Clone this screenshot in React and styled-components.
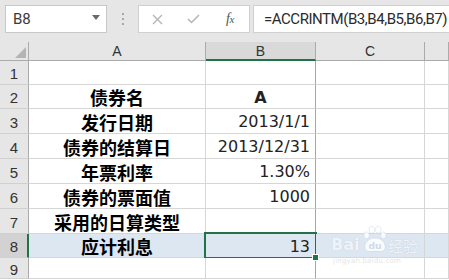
import React from "react";
import styled, { createGlobalStyle, css } from "styled-components";

const Global = createGlobalStyle`
  html, body { margin: 0; padding: 0; background: #ffffff; }
  body { width: 449px; height: 280px; overflow: hidden; }
  #root { width: 449px; height: 280px; }
`;

const Page = styled.div`
  width: 449px;
  height: 280px;
  overflow: hidden;
  background: #ffffff;
  display: flex;
  flex-direction: column;
  font-family: "Liberation Sans", Arial, sans-serif;
`;

const Toolbar = styled.div`
  height: 42px;
  flex: none;
  background: #e6e6e6;
  display: flex;
  align-items: flex-start;
  padding: 5px 0 0 5px;
  box-sizing: border-box;
`;

const NameBox = styled.div`
  width: 102px;
  height: 28px;
  box-sizing: border-box;
  background: #fff;
  border: 1px solid #c8c8c8;
  display: flex;
  align-items: center;
  justify-content: space-between;
  padding: 0 6px 0 7px;
  font-family: Roboto, "Liberation Sans", sans-serif;
  font-size: 15px;
  color: #3a3a3a;
`;

const Caret = styled.span`
  width: 0;
  height: 0;
  border-left: 4px solid transparent;
  border-right: 4px solid transparent;
  border-top: 5px solid #6a6a6a;
  margin-top: -3px;
`;

const Dots = styled.div`
  width: 31px;
  height: 28px;
  display: flex;
  flex-direction: column;
  align-items: center;
  justify-content: center;
  gap: 3px;
  & > i {
    width: 2px;
    height: 2px;
    background: #a8a8a8;
    display: block;
  }
`;

const ButtonBox = styled.div`
  width: 112px;
  height: 28px;
  box-sizing: border-box;
  background: #fff;
  border: 1px solid #d0d0d0;
  display: flex;
  align-items: center;
`;

const ToolButton = styled.div`
  width: ${(p) => p.$w}px;
  height: 100%;
  display: flex;
  align-items: center;
  justify-content: center;
  color: ${(p) => p.$color || "#bdbdbd"};
`;

const Fx = styled.span`
  font-family: "Liberation Serif", "Times New Roman", serif;
  font-style: italic;
  font-size: 14px;
  color: #555;
  letter-spacing: -0.5px;
  & > small {
    font-size: 11px;
  }
`;

const FormulaInput = styled.div`
  flex: 1;
  margin-left: 3px;
  height: 28px;
  box-sizing: border-box;
  background: #fff;
  border: 1px solid #d0d0d0;
  border-right: none;
  display: flex;
  align-items: center;
  padding-left: 10px;
  font-family: Roboto, "Liberation Sans", sans-serif;
  font-size: 15px;
  letter-spacing: -0.45px;
  color: #2b2b2b;
  white-space: nowrap;
  overflow: hidden;
`;

const Sheet = styled.div`
  position: relative;
  flex: 1;
  display: grid;
  grid-template-columns: 29px 177px 110px 109px 1fr;
  grid-template-rows: 19px 24px 24px 25px 25px 25px 25px 25px 24px 21px;
  background: #fff;
`;

const HeadCell = styled.div`
  box-sizing: border-box;
  background: ${(p) => (p.$sel ? "#d9d9d9" : "#e6e6e6")};
  border-right: 1px solid #ababab;
  border-bottom: ${(p) => (p.$sel ? "2px solid #217346" : "1px solid #ababab")};
  display: flex;
  align-items: center;
  justify-content: center;
  font-size: 14px;
  color: #333;
  padding-top: ${(p) => (p.$sel ? "1px" : "0")};
`;

const Corner = styled(HeadCell)`
  position: relative;
  align-items: flex-end;
  justify-content: flex-end;
  padding: 0 2px 2px 0;
  &::after {
    content: "";
    width: 0;
    height: 0;
    border-left: 11px solid transparent;
    border-bottom: 11px solid #b4b4b4;
  }
`;

const RowHead = styled.div`
  box-sizing: border-box;
  background: ${(p) => (p.$sel ? "#d2d2d2" : "#e6e6e6")};
  border-right: ${(p) => (p.$sel ? "2px solid #217346" : "1px solid #ababab")};
  border-bottom: 1px solid #d0d0d0;
  display: flex;
  align-items: center;
  justify-content: center;
  font-size: 15px;
  color: #333;
  padding-top: 2px;
  padding-left: ${(p) => (p.$sel ? "1px" : "0")};
`;

const Cell = styled.div`
  box-sizing: border-box;
  position: relative;
  background: ${(p) => (p.$hl ? "#dde7f2" : "#fff")};
  border-right: 1px solid ${(p) => (p.$dark ? "#a6a6a6" : "#d6d6d6")};
  border-bottom: 1px solid #d6d6d6;
  display: flex;
  align-items: center;
  padding: 1px 5px 0 5px;
  white-space: nowrap;
  justify-content: ${(p) =>
    p.$align === "center" ? "center" : p.$align === "right" ? "flex-end" : "flex-start"};
  ${(p) =>
    p.$label &&
    css`
      font-family: "Noto Sans CJK SC", "Noto Sans", sans-serif;
      font-weight: 700;
      font-size: 18px;
      line-height: 18px;
      color: #000;
    `}
  ${(p) =>
    p.$value &&
    css`
      font-family: "DejaVu Sans", "Liberation Sans", sans-serif;
      font-size: 16px;
      color: #222;
      font-weight: ${p.$bold ? 700 : 400};
    `}
  ${(p) =>
    p.$active &&
    css`
      &::after {
        content: "";
        position: absolute;
        left: -2px;
        top: -2px;
        right: -2px;
        bottom: -2px;
        border: 2px solid #217346;
        pointer-events: none;
      }
      &::before {
        content: "";
        position: absolute;
        right: -4px;
        bottom: -4px;
        width: 5px;
        height: 5px;
        background: #217346;
        border: 1px solid #fff;
        z-index: 2;
      }
    `}
`;

const Watermark = styled.div`
  position: absolute;
  left: 331px;
  top: 182px;
  width: 92px;
  height: 44px;
  pointer-events: none;
  display: flex;
  flex-direction: column;
  align-items: flex-start;
`;

const MarkLine = styled.div`
  display: flex;
  align-items: flex-end;
  height: 30px;
`;

const MarkText = styled.span`
  width: ${(p) => p.$w}px;
  font-family: "DejaVu Sans", sans-serif;
  font-weight: 700;
  font-size: ${(p) => p.$size}px;
  line-height: 1;
  color: rgba(255, 255, 255, 0.82);
  text-shadow: 0 0 1px rgba(150, 170, 190, 0.6);
  margin-bottom: 1px;
  white-space: nowrap;
  ${(p) =>
    p.$cjk &&
    css`
      font-family: "Noto Sans CJK SC", sans-serif;
      font-weight: 400;
    `}
`;

const SubMark = styled.span`
  margin: 3px 0 0 2px;
  font-family: "DejaVu Sans", sans-serif;
  font-size: 7px;
  letter-spacing: 0.2px;
  color: rgba(215, 215, 215, 0.7);
`;

const Paw = () => (
  <svg width="26" height="30" viewBox="0 0 28 30" style={{ display: "block", flex: "none" }}>
    <g fill="rgba(255,255,255,0.82)" stroke="rgba(170,185,200,0.5)" strokeWidth="0.6">
      <ellipse cx="5" cy="11" rx="3" ry="3.6" />
      <ellipse cx="10.5" cy="5" rx="3" ry="3.8" />
      <ellipse cx="17.5" cy="5" rx="3" ry="3.8" />
      <ellipse cx="23" cy="11" rx="3" ry="3.6" />
      <path d="M3 24 C3 17 9 14 14 14 C19 14 25 17 25 24 C25 29 19 29 14 28 C9 29 3 29 3 24 Z" />
    </g>
    <text
      x="14"
      y="26"
      textAnchor="middle"
      fontFamily="DejaVu Sans, sans-serif"
      fontWeight="700"
      fontSize="10"
      fill="rgba(200,215,230,0.9)"
    >
      du
    </text>
  </svg>
);

const XIcon = () => (
  <svg width="11" height="11" viewBox="0 0 11 11">
    <path d="M1 1 L10 10 M10 1 L1 10" stroke="#b5b5b5" strokeWidth="1.4" fill="none" />
  </svg>
);

const CheckIcon = () => (
  <svg width="13" height="10" viewBox="0 0 13 10">
    <path d="M1 5 L4.5 8.5 L12 1" stroke="#b5b5b5" strokeWidth="1.5" fill="none" />
  </svg>
);

const rows = [
  { n: 1 },
  { n: 2, a: "债券名", b: "A", bAlign: "center", bold: true },
  { n: 3, a: "发行日期", b: "2013/1/1" },
  { n: 4, a: "债券的结算日", b: "2013/12/31" },
  { n: 5, a: "年票利率", b: "1.30%" },
  { n: 6, a: "债券的票面值", b: "1000" },
  { n: 7, a: "采用的日算类型" },
  { n: 8, a: "应计利息", b: "13", sel: true },
  { n: 9 },
];

export default function App() {
  return (
    <Page>
      <Global />
      <Toolbar>
        <NameBox>
          <span>B8</span>
          <Caret />
        </NameBox>
        <Dots>
          <i />
          <i />
          <i />
        </Dots>
        <ButtonBox>
          <ToolButton $w={36}>
            <XIcon />
          </ToolButton>
          <ToolButton $w={36}>
            <CheckIcon />
          </ToolButton>
          <ToolButton $w={38} $color="#555">
            <Fx>
              f<small>x</small>
            </Fx>
          </ToolButton>
        </ButtonBox>
        <FormulaInput>=ACCRINTM(B3,B4,B5,B6,B7)</FormulaInput>
      </Toolbar>
      <Sheet>
        <Corner />
        <HeadCell>A</HeadCell>
        <HeadCell $sel>B</HeadCell>
        <HeadCell>C</HeadCell>
        <HeadCell />
        {rows.map((r) => (
          <React.Fragment key={r.n}>
            <RowHead $sel={r.sel}>{r.n}</RowHead>
            <Cell $label $align="center" $hl={r.sel}>
              {r.a}
            </Cell>
            <Cell
              $value
              $bold={r.bold}
              $align={r.bAlign || "right"}
              $hl={r.sel}
              $active={r.sel}
              $dark
            >
              {r.b}
            </Cell>
            <Cell $hl={r.sel} />
            <Cell $hl={r.sel} />
          </React.Fragment>
        ))}
        <Watermark>
          <MarkLine>
            <MarkText $size={16} $w={31}>
              Bai
            </MarkText>
            <Paw />
            <MarkText $size={15} $w={32} $cjk>
              经验
            </MarkText>
          </MarkLine>
          <SubMark>jingyan.baidu.com</SubMark>
        </Watermark>
      </Sheet>
    </Page>
  );
}
